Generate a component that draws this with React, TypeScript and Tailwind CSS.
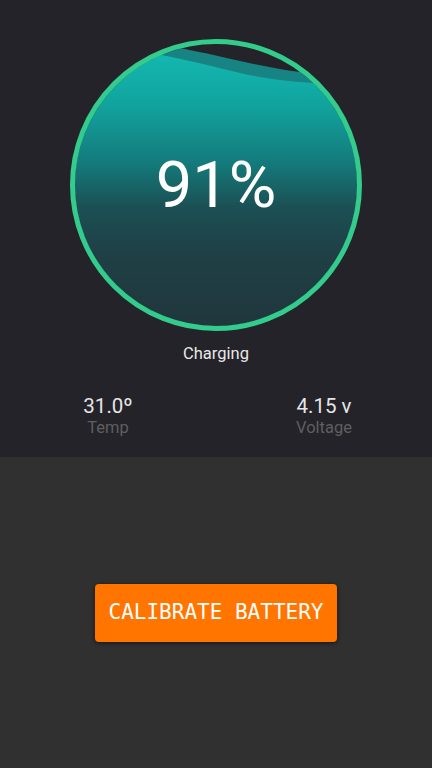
export default function App() {
  return (
    <div className="flex h-[768px] w-[432px] flex-col font-['Roboto',sans-serif]">
      <section className="flex h-[457px] flex-col items-center bg-[#242329] pt-[39px]">
        <div className="relative h-[292px] w-[292px]">
          <svg width="292" height="292" viewBox="0 0 292 292">
            <defs>
              <clipPath id="inner">
                <circle cx="146" cy="146" r="141" />
              </clipPath>
              <linearGradient id="water" x1="0" y1="10" x2="0" y2="292" gradientUnits="userSpaceOnUse">
                <stop offset="0" stopColor="#14b9b2" />
                <stop offset="0.2" stopColor="#11a39e" />
                <stop offset="0.4" stopColor="#147b7c" />
                <stop offset="0.56" stopColor="#1b5054" />
                <stop offset="0.72" stopColor="#1f4046" />
                <stop offset="1" stopColor="#20363b" />
              </linearGradient>
            </defs>
            <g clipPath="url(#inner)">
              <path d="M0 0 C60 -2 110 8 170 22 C210 31 250 38 292 36 V292 H0 Z" fill="#178382" />
              <path d="M0 6 C60 6 120 22 170 34 C200 41 240 46 292 44 V292 H0 Z" fill="url(#water)" />
            </g>
            <circle cx="146" cy="146" r="143.5" fill="none" stroke="#33cc8d" strokeWidth="5" />
          </svg>
          <div className="absolute inset-0 flex items-center justify-center">
            <span className="text-[65px] leading-none font-normal text-white">91%</span>
          </div>
        </div>
        <p className="mt-[13px] text-[16.5px] leading-[20px] text-[#e8e8e8]">Charging</p>
        <div className="mt-[31px] grid w-full grid-cols-2">
          <div className="flex flex-col items-center">
            <span className="text-[20.5px] leading-[22px] text-[#e6e6e6]">31.0º</span>
            <span className="mt-[1px] text-[16.5px] leading-[20px] text-[#5f5f5f]">Temp</span>
          </div>
          <div className="flex flex-col items-center">
            <span className="text-[20.5px] leading-[22px] text-[#e6e6e6]">4.15 v</span>
            <span className="mt-[1px] text-[16.5px] leading-[20px] text-[#5f5f5f]">Voltage</span>
          </div>
        </div>
      </section>
      <section className="flex flex-1 items-center justify-center bg-[#303030]">
        <button className="h-[58px] w-[242px] rounded-[4px] bg-[#ff7500] font-['DejaVu_Sans_Mono',monospace] text-[21px] text-white shadow-[0_1px_4px_rgba(0,0,0,0.6)]">
          CALIBRATE BATTERY
        </button>
      </section>
    </div>
  );
}
